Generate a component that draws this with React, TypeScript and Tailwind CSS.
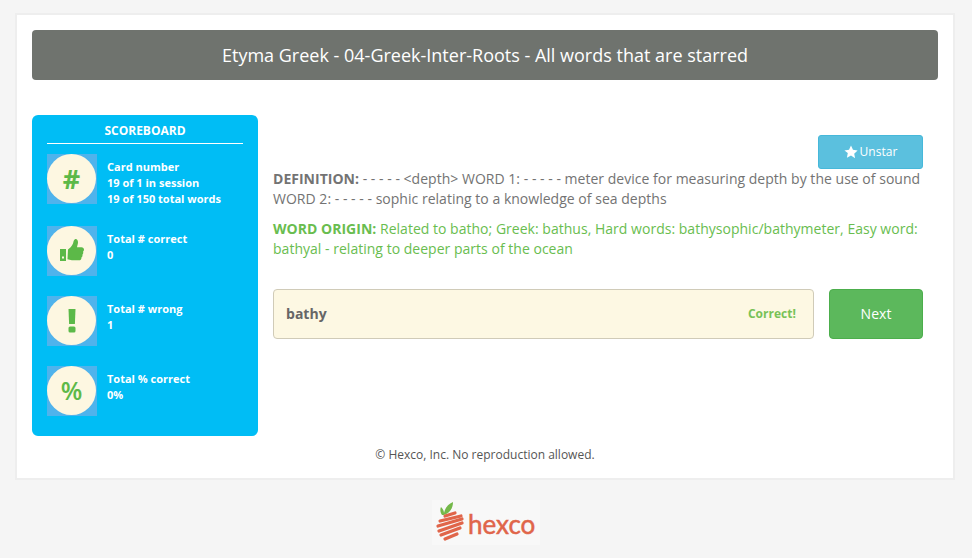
const stats = [
  { icon: 'hash', lines: ['Card number', '19 of 1 in session', '19 of 150 total words'] },
  { icon: 'thumb', lines: ['Total # correct', '0'] },
  { icon: 'bang', lines: ['Total # wrong', '1'] },
  { icon: 'percent', lines: ['Total % correct', '0%'] },
];

function StatIcon({ icon }: { icon: string }) {
  return (
    <div className="w-[50px] h-[50px] shrink-0 bg-[#4fb3ec]">
      <div className="w-[49px] h-[49px] rounded-full bg-[#fdf7e1] flex items-center justify-center text-[#5cb948] font-bold">
        {icon === 'hash' && <span className="text-[27px] leading-none">#</span>}
        {icon === 'percent' && <span className="text-[25px] leading-none font-semibold">%</span>}
        {icon === 'bang' && (
          <svg width="8" height="24" viewBox="0 0 8 24" fill="#5cb948">
            <path d="M0.5 0h7l-0.6 15H1.100z" />
            <rect x="0.5" y="17.5" width="7" height="6" rx="1.5" />
          </svg>
        )}
        {icon === 'thumb' && (
          <svg width="24" height="23" viewBox="0 0 24 23" fill="#5cb948">
            <path d="M0 10h6v12H0z M2 17.500v2h2v-2z" fillRule="evenodd" />
            <path d="M8 10.500c2-1.500 4-3.500 5-6 .6-1.700.5-3.500 2-4.300 1.800-.6 3 1 3 3 0 1.800-.7 3.300-1 5h4.500c1.500 0 2.500 1 2.500 2.400 0 1-.4 1.600-1 2.100.5 1 .3 2.300-.6 3 .3 1.100-.1 2.200-1 2.800.2 1.500-.8 2.800-2.500 2.800h-7c-1.700 0-3-.8-4.400-1z" />
          </svg>
        )}
      </div>
    </div>
  );
}

export default function App() {
  return (
    <div className="w-[972px] h-[558px] overflow-hidden bg-[#f5f5f5] font-['Open_Sans',sans-serif] pt-[13px] px-[15px]">
      <div className="w-[940px] h-[467px] bg-white border-2 border-[#eeeeee] px-[15px] pt-[15px]">
        <h1 className="h-[50px] rounded bg-[#6f736e] text-white text-[18px] flex items-center justify-center">
          Etyma Greek - 04-Greek-Inter-Roots - All words that are starred
        </h1>

        <div className="flex mt-[35px]">
          <aside className="w-[226px] h-[321px] rounded-md bg-[#00bdf5] px-[15px] pt-[6px] text-white font-bold text-[11px]">
            <h2 className="text-[12px] leading-[20px] text-center border-b border-white pb-[2px]">SCOREBOARD</h2>
            <ul className="mt-[10px] flex flex-col gap-[20px]">
              {stats.map((s) => (
                <li key={s.icon} className="flex gap-[10px] items-start first:-mb-[1px]">
                  <StatIcon icon={s.icon} />
                  <div className="leading-[16px] pt-[5px]">
                    {s.lines.map((l) => (
                      <div key={l}>{l}</div>
                    ))}
                  </div>
                </li>
              ))}
            </ul>
          </aside>

          <main className="w-[650px] ml-[15px] pt-5 text-[14px] leading-[20px] tracking-[0.02px]">
            <div className="flex justify-end">
              <button className="w-[105px] h-[34px] rounded-[3px] bg-[#5bc0de] border border-[#46b8da] text-white text-[12px] flex items-center justify-center gap-[2px]">
                <svg width="14" height="14" viewBox="0 0 24 24" fill="white">
                  <path d="M12 1l3.400 7.300 7.900 1-5.800 5.500 1.500 7.900L12 18l-7 3.700 1.500-7.900L.7 9.300l7.900-1z" />
                </svg>
                Unstar
              </button>
            </div>
            <p className="text-[#737373]">
              <b>DEFINITION:</b> - - - - - &lt;depth&gt; WORD 1: - - - - - meter device for measuring depth by the use of sound WORD 2: - - - - - sophic relating to a knowledge of sea depths
            </p>
            <p className="text-[#69bd4f] mt-[10px]">
              <b>WORD ORIGIN:</b> Related to batho; Greek: bathus, Hard words: bathysophic/bathymeter, Easy word: bathyal - relating to deeper parts of the ocean
            </p>
            <div className="flex gap-[15px] mt-[30px]">
              <div className="flex-1 h-[50px] rounded border border-[#d0cbb8] bg-[#fdf8e3] flex items-center justify-between pl-3 pr-[17px]">
                <span className="font-bold text-[#666666]">bathy</span>
                <span className="font-bold text-[12px] text-[#78c257]">Correct!</span>
              </div>
              <button className="w-[94px] h-[50px] rounded bg-[#5cb85c] border border-[#4cae4c] text-white">Next</button>
            </div>
          </main>
        </div>

        <p className="text-center text-[12px] leading-[16px] text-[#555555] mt-[11px]">© Hexco, Inc. No reproduction allowed.</p>
      </div>

      <div className="flex justify-center mt-[20px]">
        <div className="w-[108px] h-[45px] bg-[#f8f8f8] flex items-start pl-[4px] gap-[4px]">
          <svg width="28" height="42" viewBox="0 0 28 42" fill="none" className="shrink-0">
            <path d="M6 15c-2-3-2-6-1-8 2 2 3 4 3 6 1-5 4-9 9-11 0 6-3 11-9 13z" fill="#74b84a" />
            <g stroke="#e0654a" strokeWidth="3.200" strokeLinecap="round">
              <path d="M9 16l10-3" />
              <path d="M4 21l21-5" />
              <path d="M2 26l24-7" />
              <path d="M3 31l23-8" />
              <path d="M5 35l19-7" />
              <path d="M9 39l12-5" />
            </g>
          </svg>
          <span className="font-['Lato',sans-serif] text-[#e0654a] text-[26px] leading-none mt-[11px] [-webkit-text-stroke:0.5px_#e0654a]">hexco</span>
        </div>
      </div>
    </div>
  );
}
